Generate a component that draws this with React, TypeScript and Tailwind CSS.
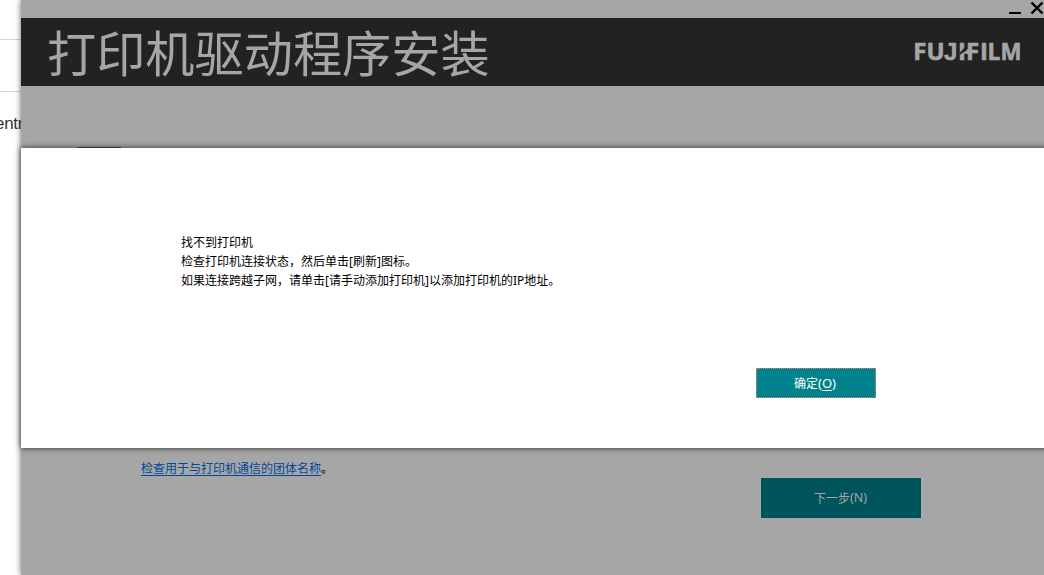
import type { FC, ReactNode } from 'react'

const Logo: FC = () => (
  <svg width="108" height="24" viewBox="0 0 108 24" className="shrink-0 overflow-visible" role="img" aria-label="FUJIFILM">
    <text
      y="20"
      fill="#a6a6a6"
      stroke="#a6a6a6"
      strokeWidth="0.6"
      fontSize="24"
      fontWeight="700"
      fontFamily="'Open Sans', 'Noto Sans', sans-serif"
    >
      <tspan x="-0.7">F</tspan>
      <tspan x="12.6">U</tspan>
      <tspan x="30" fontFamily="'Liberation Sans', Arial, sans-serif">J</tspan>
      <tspan x="44">I</tspan>
      <tspan x="52">F</tspan>
      <tspan x="66">I</tspan>
      <tspan x="73.6" textLength="12.8" lengthAdjust="spacingAndGlyphs">L</tspan>
      <tspan x="86.6" textLength="21" lengthAdjust="spacingAndGlyphs">M</tspan>
    </text>
    {/* spark between the middle I and F */}
    <path d="M45 13.5L51 7V11L46.5 14.5Z" fill="#222222" />
    <path d="M49 13.5L54.5 8.5V14Z" fill="#a6a6a6" />
  </svg>
)

const MessageLine: FC<{ children: ReactNode }> = ({ children }) => (
  <p className="whitespace-nowrap text-[12px] leading-[19px] text-black">{children}</p>
)

const App: FC = () => {
  return (
    <div className="relative flex h-[575px] w-[1044px] overflow-hidden bg-white font-['Noto_Sans','Noto_Sans_CJK_SC',sans-serif]">
      {/* page visible behind the installer */}
      <aside className="flex w-[21px] shrink-0 flex-col">
        <div className="h-10 shrink-0 border-b border-[#d3d3d3]" />
        <div className="h-[52px] shrink-0 border-b border-[#d3d3d3]" />
        <div className="-ml-[5px] pt-5 font-['Liberation_Sans',sans-serif] text-[17px] leading-[24px] tracking-[-0.3px] text-[#333333]">entr</div>
      </aside>

      <main className="relative flex w-[1023px] shrink-0 flex-col bg-[#a6a6a6] shadow-[0_0_6px_rgba(0,0,0,0.6)]">
        <div className="flex h-[18px] shrink-0 justify-end">
          <svg width="36" height="18" viewBox="0 0 36 18" stroke="#000" fill="none">
            <path d="M1 13H13" strokeWidth="2" />
            <path d="M23.5 2.5L34.5 13.5M34.5 2.5L23.5 13.5" strokeWidth="2.4" />
          </svg>
        </div>
        <header className="flex h-[68px] shrink-0 items-center justify-between bg-[#222222] pl-[26px] pr-[22px]">
          <h1 className="whitespace-nowrap pb-0.5 font-['Noto_Sans_CJK_SC',sans-serif] text-[49.2px] font-normal leading-[66px] text-[#a6a6a6]">打印机驱动程序安装</h1>
          <Logo />
        </header>
        <div className="ml-[57px] mt-[61px] h-[2px] w-[43px] shrink-0 bg-[#444444]" />
        <div className="mt-[310px] pl-[120px] text-[12px] leading-[19px] text-black">
          <a className="text-[#00479b] underline underline-offset-2">检查用于与打印机通信的团体名称</a>。
        </div>
        <button className="ml-[740px] flex h-10 w-40 shrink-0 items-center justify-center bg-[#00545c] pr-px pt-px text-[12px] text-[#a6a6a6]">
          下一步<span className="text-[12.5px]">(N)</span>
        </button>
      </main>

      <section
        role="dialog"
        className="absolute left-[21px] top-[148px] flex h-[300px] w-[1030px] flex-col bg-white pl-[160px] pt-[85px] shadow-[0_0_6px_rgba(0,0,0,0.75)]"
      >
        <MessageLine>找不到打印机</MessageLine>
        <MessageLine>检查打印机连接状态，然后单击[刷新]图标。</MessageLine>
        <MessageLine>如果连接跨越子网，请单击[请手动添加打印机]以添加打印机的IP地址。</MessageLine>
        <button className="ml-[575px] mt-[78px] flex h-[30px] w-[120px] items-center justify-center border border-dotted border-[#ff7b73] bg-[#00838c] pr-0.5 pt-px text-[12px] text-white">
          确定<span className="text-[13px]">(<span className="underline underline-offset-2">O</span>)</span>
        </button>
      </section>
    </div>
  )
}

export default App
